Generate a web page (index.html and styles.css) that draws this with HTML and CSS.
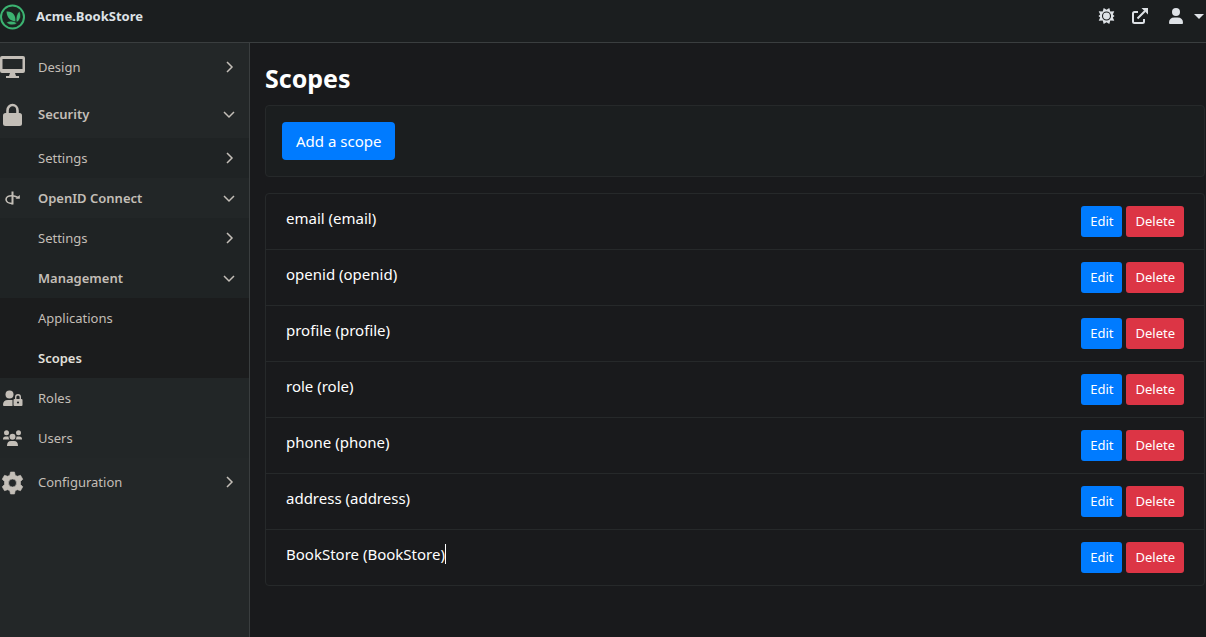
FILE: index.html
```html
<!DOCTYPE html>
<html lang="en">
<head>
<meta charset="utf-8">
<meta name="viewport" content="width=device-width, initial-scale=1">
<title>Scopes - Acme.BookStore</title>
<link rel="stylesheet" href="styles.css">
</head>
<body>
<svg class="sprite" aria-hidden="true">
  <symbol id="right" viewBox="0 0 16 16"><path d="M6 3l5 5-5 5" fill="none" stroke="currentColor" stroke-width="1.5"/></symbol>
  <symbol id="down" viewBox="0 0 16 16"><path d="M3 6l5 5 5-5" fill="none" stroke="currentColor" stroke-width="1.5"/></symbol>
</svg>
<header class="topbar">
  <a class="brand" href="#">
    <svg class="logo" viewBox="0 0 26 26" aria-hidden="true">
      <circle cx="12.500" cy="13" r="11.500" fill="#1b2420" stroke="#3cb371" stroke-width="2"/>
      <path d="M6.500 7.500C12.500 7 16 11 15.500 17.500C10 17 7 13.500 6.500 7.500Z" fill="#3cb371"/>
      <path d="M19.500 7C21.500 12 20.500 16 16.500 18.500C15.500 14 16.500 10 19.500 7Z" fill="#3cb371" stroke="#1b2420" stroke-width=".6"/>
      <path d="M6.500 18.500C9.500 16.500 14 16.700 17 19.200C13.500 21.500 9.500 21.500 6.500 18.500Z" fill="#3cb371" stroke="#1b2420" stroke-width=".5"/>
    </svg>
    <span>Acme.BookStore</span>
  </a>
  <div class="tools">
    <button class="tool" aria-label="Theme">
      <svg width="17" height="16" viewBox="0 0 16 16"><path d="M8 1.800L10.800 0L11.800 3.600L15.800 3.300L14.300 6.600L16 8L14.300 9.400L15.800 12.700L11.800 12.400L10.800 16L8 14.200L5.200 16L4.200 12.400L.2 12.700L1.700 9.400L0 8L1.700 6.600L.2 3.300L4.200 3.600L5.200 0Z" fill="currentColor"/><circle cx="8" cy="8" r="4" fill="none" stroke="#1b1e1f" stroke-width="1.100"/></svg>
    </button>
    <button class="tool" aria-label="Open site">
      <svg width="18" height="17" viewBox="0 0 18 17"><path d="M7 4H3.500Q2 4 2 5.500V13.500Q2 15 3.500 15H11.500Q13 15 13 13.500V11M6.500 10.500L14 3" fill="none" stroke="currentColor" stroke-width="2"/><path d="M10.500 0H17V6.500Z" fill="currentColor"/></svg>
    </button>
    <button class="tool user" aria-label="User">
      <svg width="14" height="16" viewBox="0 0 14 16"><circle cx="7" cy="4" r="4" fill="currentColor"/><path d="M0 15Q0 9.500 5.500 9.500H8.500Q14 9.500 14 15Q14 16 13 16H1Q0 16 0 15Z" fill="currentColor"/></svg>
      <svg width="10" height="5" viewBox="0 0 10 5"><path d="M0 0H10L5 5Z" fill="currentColor"/></svg>
    </button>
  </div>
</header>
<div class="shell">
  <nav class="sidebar" aria-label="Main">
    <a class="item tall first" href="#">
      <svg class="icon" viewBox="0 0 25 25"><path fill-rule="evenodd" d="M2 2H23Q25 2 25 4V17Q25 19 23 19H15L16 22H19V24H6V22H9L10 19H2Q0 19 0 17V4Q0 2 2 2ZM2.500 5V15H22.500V5Z" fill="currentColor"/></svg>
      <span>Design</span><svg class="chev"><use href="#right"/></svg></a>
    <a class="item tall open" href="#">
      <svg class="icon" viewBox="0 0 25 25"><path d="M7.500 12V8.500A5 5.500 0 0 1 17.500 8.500V12" fill="none" stroke="currentColor" stroke-width="2.600"/><rect x="3" y="11" width="19" height="13" rx="2.500" fill="currentColor"/></svg>
      <span>Security</span><svg class="chev"><use href="#down"/></svg></a>
    <div class="sub">
      <a class="item" href="#"><i class="icon"></i><span>Settings</span><svg class="chev"><use href="#right"/></svg></a>
      <a class="item open raised" href="#">
        <svg class="icon" viewBox="0 0 25 25"><path d="M12.500 18.500V5.500" stroke="currentColor" stroke-width="2" fill="none"/><path d="M12.500 17.600C3.500 17 4.500 9.500 12 9.700Q15 9.700 18 11.500" fill="none" stroke="currentColor" stroke-width="1.600"/><path d="M19.800 9V12.800H15.500Z" fill="currentColor"/></svg>
        <span>OpenID Connect</span><svg class="chev"><use href="#down"/></svg></a>
      <a class="item" href="#"><i class="icon"></i><span>Settings</span><svg class="chev"><use href="#right"/></svg></a>
      <a class="item open" href="#"><i class="icon"></i><span>Management</span><svg class="chev"><use href="#down"/></svg></a>
      <div class="leaf">
        <a class="item" href="#"><i class="icon"></i><span>Applications</span></a>
        <a class="item open current" href="#" aria-current="page"><i class="icon"></i><span>Scopes</span></a>
      </div>
      <a class="item raised" href="#">
        <svg class="icon" viewBox="0 0 25 25"><circle cx="9.500" cy="8.500" r="4" fill="currentColor"/><path d="M3 19Q3 14 8 14H12.500V20H4Q3 20 3 19Z" fill="currentColor"/><path d="M15.700 14V11A2.300 2.300 0 0 1 20.300 11V14" fill="none" stroke="currentColor" stroke-width="1.400"/><rect x="13.500" y="13" width="9" height="7" rx="1" fill="currentColor"/><circle cx="18" cy="16.500" r="1.100" fill="#222627"/></svg>
        <span>Roles</span></a>
      <a class="item raised" href="#">
        <svg class="icon" viewBox="0 0 25 25"><g fill="currentColor"><circle cx="6.500" cy="6.700" r="2.500"/><circle cx="18.500" cy="6.700" r="2.500"/><circle cx="12.500" cy="10.700" r="3"/><path d="M3 13Q3 10.500 5.500 10.500H8.500Q8.500 12.500 9.500 13.500H3ZM22 13Q22 10.500 19.500 10.500H16.500Q16.500 12.500 15.500 13.500H22ZM7 20Q7 15 11 15H14Q18 15 18 20Z"/></g></svg>
        <span>Users</span></a>
    </div>
    <a class="item tall" href="#">
      <svg class="icon" viewBox="0 0 25 25"><path fill-rule="evenodd" d="M10.500 2H14.500L15.200 5.200L17.300 6.300L20.500 5.300L22.800 9.200L20.500 11.500V14.500L22.800 16.800L20.500 20.700L17.300 19.700L15.200 20.800L14.500 24H10.500L9.800 20.800L7.700 19.700L4.500 20.700L2.200 16.800L4.500 14.500V11.500L2.200 9.200L4.500 5.300L7.700 6.300L9.800 5.200ZM12.500 9A4 4 0 1 0 12.500 17A4 4 0 1 0 12.500 9Z" fill="currentColor" stroke="currentColor" stroke-width=".6" stroke-linejoin="round"/></svg>
      <span>Configuration</span><svg class="chev"><use href="#right"/></svg></a>
  </nav>
  <main class="content">
    <h1>Scopes</h1>
    <div class="card"><button class="btn primary">Add a scope</button></div>
    <ul class="list">
      <li><span>email (email)</span><div class="acts"><button class="btn small primary">Edit</button><button class="btn small danger">Delete</button></div></li>
      <li><span>openid (openid)</span><div class="acts"><button class="btn small primary">Edit</button><button class="btn small danger">Delete</button></div></li>
      <li><span>profile (profile)</span><div class="acts"><button class="btn small primary">Edit</button><button class="btn small danger">Delete</button></div></li>
      <li><span>role (role)</span><div class="acts"><button class="btn small primary">Edit</button><button class="btn small danger">Delete</button></div></li>
      <li><span>phone (phone)</span><div class="acts"><button class="btn small primary">Edit</button><button class="btn small danger">Delete</button></div></li>
      <li><span>address (address)</span><div class="acts"><button class="btn small primary">Edit</button><button class="btn small danger">Delete</button></div></li>
      <li><div><span class="caret">BookStore (BookStore)</span></div><div class="acts"><button class="btn small primary">Edit</button><button class="btn small danger">Delete</button></div></li>
    </ul>
  </main>
</div>
</body>
</html>
```
FILE: styles.css
```css
* { box-sizing: border-box; }
body {
  margin: 0;
  min-height: 100vh;
  display: flex;
  flex-direction: column;
  background: #191a1c;
  color: #fff;
  font: 15px/24px "Noto Sans", "Open Sans", sans-serif;
}
a { color: inherit; text-decoration: none; }
button { font: inherit; color: inherit; border: 0; cursor: pointer; }
.sprite { display: none; }
.topbar {
  display: flex;
  justify-content: space-between;
  align-items: flex-start;
  height: 43px;
  padding-top: 4px;
  background: #1b1e1f;
  border-bottom: 1px solid #3a3e3f;
  color: #dee2e6;
}
.brand { display: flex; align-items: flex-start; gap: 10px; font-size: 13px; font-weight: 700; }
.logo { width: 26px; height: 26px; }
.tools { display: flex; align-items: center; gap: 16px; height: 24px; padding-right: 2px; }
.tool { display: flex; align-items: center; padding: 0; background: none; }
.user { gap: 11px; margin-left: 4px; }
.shell { display: flex; flex: 1; }
.sidebar {
  flex: 0 0 250px;
  background: #232728;
  border-right: 1px solid #3a3e3f;
  color: #c3beb7;
  font-size: 13px;
}
.item { display: flex; align-items: center; height: 40px; padding-right: 12px; }
.tall { height: 48px; }
.first { height: 47px; }
.open { font-weight: 600; }
.icon { flex: 0 0 25px; width: 25px; height: 25px; margin-right: 13px; }
.item span { flex: 1; }
.chev { width: 16px; height: 16px; }
.sub { background: #1f2324; }
.raised { background: #222627; }
.leaf { background: #1b1c1d; }
.current { color: #e3e0dc; }
.content { flex: 1; min-width: 0; padding: 16px 1px 16px 15px; }
h1 { margin: 0 0 8px; font-size: 25px; line-height: 38px; font-weight: 700; }
.card { padding: 16px; background: #1b1e1f; border: 1px solid #26292a; border-radius: 4px; }
.btn { display: block; padding: 0 13px; border-radius: 4px; line-height: 38px; color: #fff; }
.card .btn { padding: 0 14px; }
.primary { background: #007bff; }
.danger { background: #dc3545; }
.small { padding: 0 9px; border-radius: 3px; font-size: 13px; line-height: 31px; }
.list { margin: 16px 0 0; padding: 0; list-style: none; border: 1px solid #26292a; border-radius: 4px; }
.list li { display: flex; justify-content: space-between; align-items: flex-start; padding: 12px 20px; }
.list li + li { border-top: 1px solid #26292a; }
.acts { display: flex; gap: 4px; }
.caret { border-right: 1px solid #fff; }
```
